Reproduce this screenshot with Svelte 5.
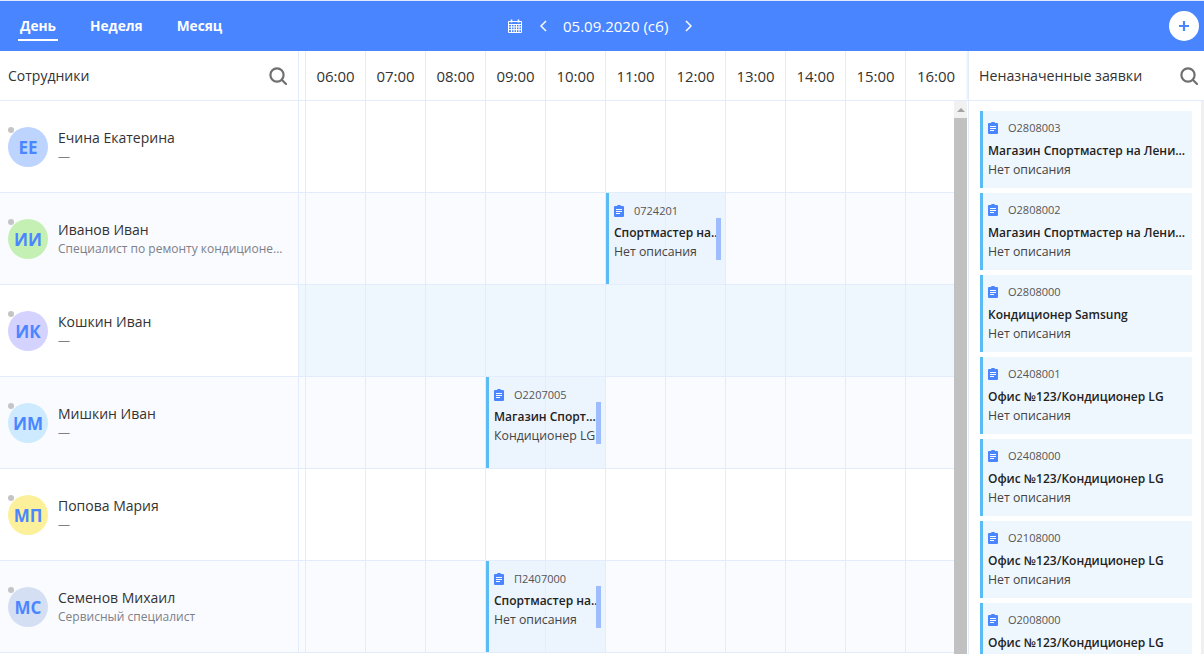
<script>
	const hours = ['06:00', '07:00', '08:00', '09:00', '10:00', '11:00', '12:00', '13:00', '14:00', '15:00', '16:00'];

	const employees = [
		{ name: 'Ечина Екатерина', role: '—', initials: 'ЕЕ', color: '#bdd4ff' },
		{
			name: 'Иванов Иван',
			role: 'Специалист по ремонту кондиционе...',
			initials: 'ИИ',
			color: '#c5f0b4',
			event: { start: 5, code: '0724201', title: 'Спортмастер на...', desc: 'Нет описания' }
		},
		{ name: 'Кошкин Иван', role: '—', initials: 'ИК', color: '#d4d2ff', active: true },
		{
			name: 'Мишкин Иван',
			role: '—',
			initials: 'ИМ',
			color: '#cdeaff',
			event: { start: 3, code: 'О2207005', title: 'Магазин Спорт...', desc: 'Кондиционер LG' }
		},
		{ name: 'Попова Мария', role: '—', initials: 'МП', color: '#fdf09a' },
		{
			name: 'Семенов Михаил',
			role: 'Сервисный специалист',
			initials: 'МС',
			color: '#d5dff3',
			event: { start: 3, code: 'П2407000', title: 'Спортмастер на...', desc: 'Нет описания' }
		}
	];

	const tickets = [
		{ code: 'О2808003', title: 'Магазин Спортмастер на Лени...' },
		{ code: 'О2808002', title: 'Магазин Спортмастер на Лени...' },
		{ code: 'О2808000', title: 'Кондиционер Samsung' },
		{ code: 'О2408001', title: 'Офис №123/Кондиционер LG' },
		{ code: 'О2408000', title: 'Офис №123/Кондиционер LG' },
		{ code: 'О2108000', title: 'Офис №123/Кондиционер LG' },
		{ code: 'О2008000', title: 'Офис №123/Кондиционер LG' }
	];
</script>

{#snippet clipboard()}
	<svg class="clip" viewBox="0 0 10 12" width="10" height="12">
		<path fill="#4a86ff" d="M1 1h2.200V.5A.5.5 0 0 1 3.700 0h2.600a.5.5 0 0 1 .5.5V1H9a1 1 0 0 1 1 1v9a1 1 0 0 1-1 1H1a1 1 0 0 1-1-1V2a1 1 0 0 1 1-1z" />
		<path stroke="#fff" stroke-width="1" d="M2 4.500h6M2 6.500h6M2 8.500h4" />
	</svg>
{/snippet}

{#snippet search(color)}
	<svg viewBox="0 0 18 18" width="18" height="18" fill="none" stroke={color} stroke-width="2.2">
		<circle cx="8" cy="8" r="6.6" />
		<path d="M13 13l4 4" stroke-linecap="round" />
	</svg>
{/snippet}

<div class="page">
	<header class="topbar">
		<nav class="tabs">
			<span class="tab current">День</span>
			<span class="tab">Неделя</span>
			<span class="tab">Месяц</span>
		</nav>
		<div class="date">
			<svg viewBox="0 0 14 14" width="14" height="14" fill="none" stroke="#fff" stroke-width="1">
				<path d="M.5 2.500h13v11H.5zM.5 5.500h13M.5 8h13M.5 10.700h13M3.500 5.500v8M6 5.500v8M8.500 5.500v8M11 5.500v8" />
				<path d="M3.500 .5v3M10.500 .5v3" stroke-width="1.600" />
			</svg>
			<svg class="chev" viewBox="0 0 7 12" width="7" height="12" fill="none" stroke="#fff" stroke-width="1.500">
				<path d="M6 1L1 6l5 5" />
			</svg>
			<span class="date-text">05.09.2020 (сб)</span>
			<svg class="chev" viewBox="0 0 7 12" width="7" height="12" fill="none" stroke="#fff" stroke-width="1.500">
				<path d="M1 1l5 5-5 5" />
			</svg>
		</div>
		<button class="add" aria-label="Добавить">
			<svg viewBox="0 0 10 10" width="10" height="10" stroke="#4a86ff" stroke-width="2.200">
				<path d="M5 0v10M0 5h10" />
			</svg>
		</button>
	</header>

	<div class="head">
		<div class="head-staff">
			<span>Сотрудники</span>
			{@render search('#6f6f6f')}
		</div>
		<div class="gutter"></div>
		<div class="head-hours">
			{#each hours as hour}
				<div class="hour">{hour}</div>
			{/each}
		</div>
		<div class="head-side">
			<span>Неназначенные заявки</span>
			{@render search('#6f6f6f')}
		</div>
	</div>

	<div class="body">
		<div class="rows">
			{#each employees as emp, i}
				<div class="row" class:tinted={i % 2 === 1} class:active={emp.active}>
					<div class="staff">
						<div class="avatar" style="background: {emp.color}">
							<i class="dot"></i>
							{emp.initials}
						</div>
						<div class="staff-text">
							<div class="name">{emp.name}</div>
							<div class="role">{emp.role}</div>
						</div>
					</div>
					<div class="gutter"></div>
					<div class="cells">
						{#each hours as hour}
							<div class="cell"></div>
						{/each}
						{#if emp.event}
							<div class="event" style="left: {emp.event.start * 60}px">
								<div class="code">{@render clipboard()}<span>{emp.event.code}</span></div>
								<div class="title">{emp.event.title}</div>
								<div class="desc">{emp.event.desc}</div>
								<i class="handle"></i>
							</div>
						{/if}
					</div>
				</div>
			{/each}
		</div>

		<div class="scrollbar">
			<div class="arrow"></div>
			<div class="thumb"></div>
		</div>

		<aside class="side">
			<div class="tickets">
				{#each tickets as t}
					<div class="ticket">
						<div class="code">{@render clipboard()}<span>{t.code}</span></div>
						<div class="title">{t.title}</div>
						<div class="desc">Нет описания</div>
					</div>
				{/each}
			</div>
		</aside>
	</div>
</div>

<style>
	:global(body) {
		margin: 0;
		background: #fff;
	}

	.page {
		height: 654px;
		overflow: hidden;
		font-family: 'Open Sans', 'Liberation Sans', sans-serif;
		color: #333;
	}

	.topbar {
		height: 50px;
		border-top: 1px solid #dfe9ff;
		background: #4985ff;
		display: flex;
		align-items: center;
		position: relative;
		color: #fff;
	}

	.tabs {
		display: flex;
		gap: 30px;
		margin-left: 18px;
	}

	.tab {
		font-size: 13.700px;
		font-weight: 700;
		padding: 0 2px;
		line-height: 26px;
		border-bottom: 2px solid transparent;
		margin-top: 1px;
	}

	.tab.current {
		border-bottom-color: #fff;
	}

	.date {
		position: absolute;
		left: 508px;
		top: 0;
		height: 50px;
		display: flex;
		align-items: center;
	}

	.chev {
		margin-left: 18px;
	}

	.date-text {
		font-size: 15px;
		margin: 0 17px 0 16px;
		white-space: nowrap;
	}

	.date-text + .chev {
		margin-left: 0;
	}

	.add {
		margin-left: auto;
		margin-right: 5px;
		width: 30px;
		height: 30px;
		border: 0;
		padding: 0;
		border-radius: 50%;
		background: #fff;
		display: flex;
		align-items: center;
		justify-content: center;
	}

	.head {
		height: 49px;
		display: flex;
		border-bottom: 1px solid #e3ecfb;
		font-size: 14px;
	}

	.head-staff {
		width: 298px;
		flex: none;
		box-sizing: border-box;
		padding: 0 11px 0 8px;
		display: flex;
		align-items: center;
		justify-content: space-between;
	}

	.gutter {
		width: 6px;
		flex: none;
		border-left: 1px solid #e3ecfb;
		border-right: 1px solid #e3ecfb;
	}

	.head-hours {
		display: flex;
		flex: none;
		width: 662px;
	}

	.hour {
		width: 60px;
		flex: none;
		box-sizing: border-box;
		border-right: 1px solid #e3ecfb;
		display: flex;
		align-items: center;
		justify-content: center;
		font-size: 15px;
	}

	.hour:last-child {
		border-right: 0;
	}

	.head-side {
		flex: 1;
		min-width: 0;
		box-shadow: -1px 0 2px #e3ecfb;
		border-left: 1px solid #e3ecfb;
		padding: 0 6px 0 10px;
		display: flex;
		align-items: center;
		justify-content: space-between;
		font-size: 14.200px;
		white-space: nowrap;
	}

	.body {
		display: flex;
		height: 553px;
	}

	.rows {
		width: 954px;
		flex: none;
		overflow: hidden;
	}

	.row {
		height: 91px;
		display: flex;
		border-bottom: 1px solid #e3ecfb;
	}

	.row.tinted {
		background: #fafbff;
	}

	.row.active .cells,
	.row.active .gutter {
		background: #eef6fe;
	}

	.staff {
		width: 298px;
		flex: none;
		box-sizing: border-box;
		padding: 26px 8px 0;
		display: flex;
		gap: 10px;
	}

	.avatar {
		width: 40px;
		height: 40px;
		flex: none;
		border-radius: 50%;
		position: relative;
		display: flex;
		align-items: center;
		justify-content: center;
		color: #4a86ff;
		font-size: 17px;
		font-weight: 700;
	}

	.dot {
		position: absolute;
		left: 0;
		top: 0;
		width: 6px;
		height: 6px;
		border-radius: 50%;
		background: #c4c4c4;
	}

	.staff-text {
		margin-top: 1px;
	}

	.name {
		font-size: 14px;
		line-height: 20px;
	}

	.role {
		font-size: 12px;
		line-height: 18px;
		color: #7c8088;
		white-space: nowrap;
	}

	.cells {
		flex: 1;
		min-width: 0;
		display: flex;
		position: relative;
		overflow: hidden;
	}

	.cell {
		width: 60px;
		flex: none;
		box-sizing: border-box;
		border-right: 1px solid #e3ecfb;
	}

	.event {
		position: absolute;
		top: 0;
		bottom: 0;
		width: 119px;
		box-sizing: border-box;
		border-left: 3px solid #5bbcf5;
		background: rgba(226, 240, 253, 0.6);
		padding: 11px 5px;
	}

	.event .title {
		margin-top: 6px;
	}

	.handle {
		position: absolute;
		right: 4px;
		top: 25px;
		width: 5px;
		height: 42px;
		background: #9dbdff;
	}

	.code {
		display: flex;
		align-items: center;
		gap: 10px;
		font-size: 11px;
		line-height: 14px;
		color: #555;
	}

	.clip {
		flex: none;
	}

	.title {
		margin-top: 7px;
		font-size: 12px;
		font-weight: 600;
		line-height: 18px;
		color: #222;
		white-space: nowrap;
	}

	.desc {
		font-size: 12.300px;
		line-height: 18px;
		margin-top: 1px;
		color: #444;
		white-space: nowrap;
	}

	.scrollbar {
		width: 13px;
		flex: none;
		background: #f1f1f1;
		display: flex;
		flex-direction: column;
		margin-right: 1px;
	}

	.arrow {
		height: 17px;
		display: flex;
		align-items: center;
		justify-content: center;
		position: relative;
	}

	.arrow::before {
		content: '';
		border: 4px solid transparent;
		border-top: 0;
		border-bottom: 4px solid #a3a3a3;
	}

	.thumb {
		flex: 1;
		background: #c1c1c1;
	}

	.side {
		flex: 1;
		min-width: 0;
		box-sizing: border-box;
		border-left: 1px solid #e3ecfb;
		border-right: 3px solid #f0f0f0;
		padding: 10px 9px 0 11px;
		overflow: hidden;
	}

	.tickets {
		display: flex;
		flex-direction: column;
		gap: 5px;
	}

	.ticket {
		height: 77px;
		flex: none;
		box-sizing: border-box;
		border-left: 3px solid #5bbcf5;
		background: #eff7fe;
		padding: 10px 5px;
	}
</style>
